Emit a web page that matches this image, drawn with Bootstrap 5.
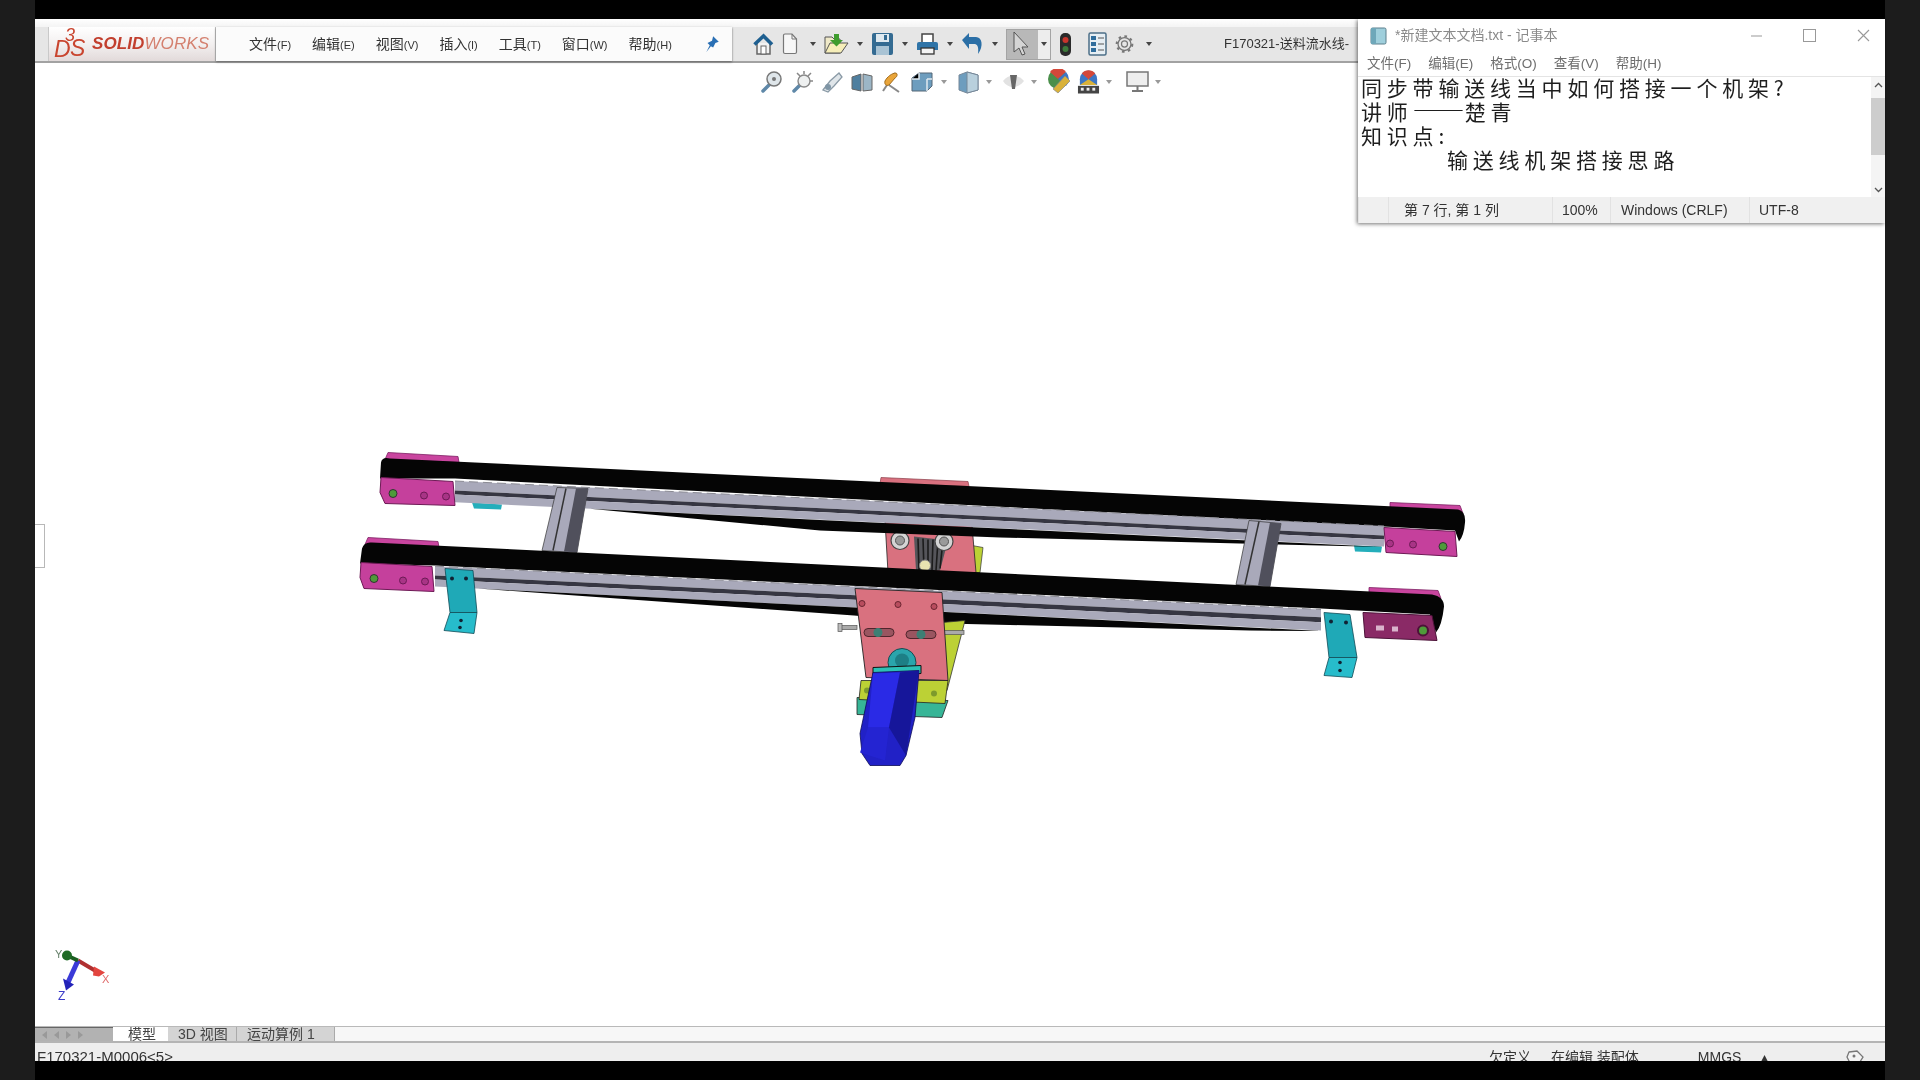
<!DOCTYPE html>
<html lang="zh-CN">
  <head>
    <meta charset="UTF-8" />
    <meta name="viewport" content="width=device-width, initial-scale=1" />
    <title>SOLIDWORKS</title>
    <link href="https://cdn.jsdelivr.net/npm/bootstrap@5.3.0/dist/css/bootstrap.min.css" rel="stylesheet" />
    <style>
      html, body { width: 1920px; height: 1080px; overflow: hidden; }
      body { background: #000; font-family: "Liberation Sans", "Noto Sans CJK SC", sans-serif; color: #333; }
      .side { width: 35px; height: 1080px; background: #1c1c1c; }
      .center { width: 1850px; filter: blur(.45px); }
      .band { height: 19px; background: #000; }
      .app { height: 1042px; background: #fff; }

      /* top toolbar */
      .top-strip { height: 8px; background: linear-gradient(#fff, #f4f4f4); }
      .main-bar { height: 36px; background: #e6e6e6; border-bottom: 2px solid #a2a2a2; }
      .logo-gap { width: 13px; }
      .logo { width: 168px; padding-left: 5px; background: linear-gradient(#fff, #f3f0f0 50%, #e2dada); border-right: 1px solid #c4c4c4; border-left: 1px solid #c9c9c9; }
      .logo-word { font: italic 700 17px "Liberation Sans", sans-serif; color: #c23f2e; letter-spacing: .1px; }
      .logo-word span { font-weight: 400; color: #d4806f; }
      .menu-panel { width: 516px; background: #fbfbfb; padding-left: 33px; gap: 21px; font-size: 14px; box-shadow: 0 1px 2px #666; }
      .menu-panel small { font-size: 11px; }
      .pin { margin-left: 11px; }
      .tools { padding-left: 21px; gap: 8px; }
      .caret { width: 0; height: 0; border: 3px solid transparent; border-top: 4px solid #444; border-bottom: 0; }
      .sel-box { height: 31px; background: #b8b8b8; border: 1px solid #a4a4a4; }
      .sel-main { width: 31px; }
      .sel-drop { width: 12px; background: #ededed; }
      .doc-title { margin-left: 64px; font-size: 13px; white-space: nowrap; color: #333; }

      /* viewport with the model */
      .viewport { flex: 1; min-height: 0; }
      .model { position: absolute; inset: 0; width: 100%; height: 100%; }
      .view-tools { position: relative; padding: 5px 0 0 725px; gap: 6px; height: 32px; }
      .view-tools .caret { border-top-color: #999; }
      .handle { position: absolute; left: 0; top: 461px; width: 10px; height: 44px; background: #fff; border: 1px solid #b8b8b8; border-left: 0; }

      /* bottom tabs */
      .tabs { height: 17px; background: #f7f7f7; border-top: 1px solid #b9b9b9; border-bottom: 2px solid #b4b4b4; font-size: 14px; line-height: 15px; }
      .tab-nav { width: 78px; background: #b2b2b2; border-top: 1px solid #666; gap: 7px; padding-left: 7px; }
      .tab-nav i { width: 0; height: 0; border: 4px solid transparent; border-right: 5px solid #999; border-left: 0; }
      .tab-nav i.fw { border-right: 0; border-left: 5px solid #999; }
      .tab { padding: 0 10px; background: #d4d4d4; border-right: 1px solid #aaa; color: #444; }
      .tab.model-tab { width: 55px; padding: 0 15px; background: #fff; border: 0; white-space: nowrap; }
      .tab.t3d { width: 69px; }
      .tab.motion { width: 98px; }
      .status { height: 18px; background: #eeeeee; font-size: 15px; line-height: 18px; padding-top: 5px; overflow: hidden; color: #333; }
      .status .st-a { margin-left: 2px; }
      .st-b { margin-left: 1316px; font-size: 14px; }
      .st-c { margin-left: 20px; font-size: 14px; }
      .st-d { margin-left: 59px; font-size: 14px; }
      .st-e { margin-left: 20px; font-size: 14px; }
      .st-f { margin-left: 78px; }

      /* notepad window */
      .notepad { position: absolute; left: 1323px; top: 0; width: 527px; height: 204px; background: #fff; box-shadow: -1px 1px 4px rgba(0, 0, 0, .55); }
      .np-title { height: 33px; padding-left: 12px; color: #8a8a8a; font-size: 14px; gap: 8px; }
      .np-btns { gap: 41px; padding-right: 15px; }
      .np-menu { height: 24px; padding-left: 9px; gap: 17px; font-size: 13.5px; color: #6e6e6e; }
      .np-body { height: 121px; border-top: 1px solid #e4e4e4; }
      .np-lines { margin-top: -2px; }
      .np-text { height: 24px; padding-left: 3px; font: 21px/24px "Noto Sans CJK SC", sans-serif; letter-spacing: 4.8px; color: #1e1e1e; white-space: nowrap; }
      .np-dash { font-size: 26px; line-height: 0; letter-spacing: 0; }
      .np-indent { padding-left: 89px; }
      .np-scroll { width: 14px; background: #f4f4f4; }
      .np-thumb { height: 57px; background: #cdcdcd; margin: 6px 0; }
      .np-arrow { height: 15px; }
      .np-status { height: 26px; background: #f0f0f0; font-size: 14px; color: #333; }
      .np-status div { border-left: 1px solid #e2e2e2; line-height: 26px; white-space: nowrap; }
      .c1 { width: 30px; }
      .c2 { width: 164px; padding-left: 15px; }
      .c3 { width: 58px; padding-left: 9px; }
      .c4 { width: 139px; padding-left: 10px; }
      .c5 { width: 136px; padding-left: 9px; }
    </style>
  </head>
  <body>
    <div class="d-flex">
      <div class="side flex-shrink-0"></div>

      <div class="center flex-shrink-0">
        <div class="band"></div>

        <div class="app d-flex flex-column position-relative">
          <div class="top-strip"></div>

          <!-- logo, menu and main toolbar -->
          <div class="main-bar d-flex">
            <div class="logo-gap"></div>
            <div class="logo d-flex align-items-center">
              <svg class="flex-shrink-0" width="38" height="34" viewBox="0 0 38 34">
                <text x="11" y="14" font-size="18" font-style="italic" fill="#c9452f" font-family="Liberation Sans">3</text>
                <text x="0" y="30" font-size="23" font-style="italic" fill="#c9452f" font-family="Liberation Sans">D</text>
                <text x="16" y="29" font-size="23" font-style="italic" fill="#c9452f" font-family="Liberation Sans">S</text>
              </svg>
              <div class="logo-word text-nowrap">SOLID<span>WORKS</span></div>
            </div>
            <div class="menu-panel d-flex align-items-center position-relative">
              <div>文件<small>(F)</small></div>
              <div>编辑<small>(E)</small></div>
              <div>视图<small>(V)</small></div>
              <div>插入<small>(I)</small></div>
              <div>工具<small>(T)</small></div>
              <div>窗口<small>(W)</small></div>
              <div>帮助<small>(H)</small></div>
              <svg class="pin" width="16" height="18" viewBox="0 0 14 16"><path d="M8 1l5 5-3 1-2 4-2-1-4 5 3-6-2-2 4-2z" fill="#2a6fb4"/></svg>
            </div>
            <div class="tools d-flex align-items-center">
              <!-- home -->
              <svg width="21" height="22" viewBox="0 0 21 22"><path d="M4 10v11h13V10" fill="#f2f2f2" stroke="#666" stroke-width="1.5"/><rect x="8" y="13" width="5" height="8" fill="#fff" stroke="#666"/><path d="M1.5 11.5L10.500 3l8.500 8.500" fill="none" stroke="#1e5f90" stroke-width="3.600"/></svg>
              <!-- new -->
              <svg width="16" height="22" viewBox="0 0 16 22"><path d="M1.500 2.500a1.500 1.500 0 0 1 1.500-1.500h7l4.500 5v13a1.500 1.500 0 0 1-1.500 1.500H3a1.500 1.500 0 0 1-1.500-1.500z" fill="#f7f7f7" stroke="#777" stroke-width="1.200"/><path d="M10 1v5h4.500" fill="none" stroke="#777"/></svg>
              <div class="caret ms-1"></div>
              <!-- open -->
              <svg width="25" height="24" viewBox="0 0 25 24"><path d="M1 5h7l2 2h6v14H1z" fill="#efe9c8" stroke="#555"/><path d="M1 21l5-10h18l-7 10z" fill="#f6eeb9" stroke="#555"/><path d="M10 2h5v6h4l-6.500 6.500L6 8h4z" fill="#3f9c2e"/></svg>
              <div class="caret"></div>
              <!-- save -->
              <svg width="23" height="24" viewBox="0 0 23 24"><rect x="1" y="1" width="21" height="22" rx="2" fill="#346b92"/><rect x="5" y="2" width="13" height="8" fill="#dfe9ef"/><rect x="5" y="14" width="13" height="9" fill="#a9c3d4"/><rect x="13" y="3" width="3" height="5" fill="#346b92"/></svg>
              <div class="caret"></div>
              <!-- print -->
              <svg width="23" height="24" viewBox="0 0 23 24"><rect x="6" y="2" width="11" height="9" fill="#fff" stroke="#444" stroke-width="1.500"/><path d="M3 10h17a2 2 0 0 1 2 2v6H1v-6a2 2 0 0 1 2-2z" fill="#2f74a8"/><rect x="5" y="16" width="13" height="6" fill="#f4f4f4" stroke="#333" stroke-width="1.300"/></svg>
              <div class="caret"></div>
              <!-- undo -->
              <svg width="23" height="24" viewBox="0 0 23 24"><path d="M8 5h7c6 0 8 9 2 17 1-8-1-10-4-10H8v5L1 8l7-7z" fill="#2b6fa6"/></svg>
              <div class="caret"></div>
              <!-- select -->
              <div class="sel-box d-flex">
                <div class="sel-main d-flex align-items-center">
                  <svg class="ms-1" width="18" height="26" viewBox="0 0 18 26"><path d="M3 1v20l5-4 3 7 3-1-3-7h6z" fill="#d4d4d4" stroke="#555"/></svg>
                </div>
                <div class="sel-drop d-flex align-items-center justify-content-center"><div class="caret"></div></div>
              </div>
              <!-- rebuild light -->
              <svg width="13" height="25" viewBox="0 0 13 25"><rect x="1" y="1" width="11" height="23" rx="5" fill="#2a2a2a"/><circle cx="6.500" cy="8" r="3" fill="#c8352c"/><circle cx="6.500" cy="17" r="3" fill="#3d7a3a"/></svg>
              <!-- file properties -->
              <svg class="ms-2" width="19" height="24" viewBox="0 0 19 24"><rect x="1" y="1" width="17" height="22" rx="1.500" fill="#e6eef3" stroke="#4c6f88" stroke-width="1.500"/><g fill="#2f6d9c"><rect x="3" y="4" width="5" height="4"/><rect x="3" y="10" width="5" height="4"/><rect x="3" y="16" width="5" height="4"/></g><g stroke="#555"><path d="M10 6h6M10 12h6M10 18h6"/></g></svg>
              <!-- options -->
              <svg width="19" height="22" viewBox="0 0 22 22"><circle cx="11" cy="11" r="7.500" fill="none" stroke="#777" stroke-width="1.500"/><circle cx="11" cy="11" r="9" fill="none" stroke="#777" stroke-width="2.500" stroke-dasharray="3 4"/><circle cx="11" cy="11" r="3.500" fill="none" stroke="#777" stroke-width="1.400"/></svg>
              <div class="caret ms-1"></div>
              <div class="doc-title">F170321-送料流水线-</div>
            </div>
          </div>

          <!-- graphics area -->
          <div class="viewport position-relative">
            <svg class="model" viewBox="35 63 1850 962">
              <!-- back motor plate, behind both rails -->
              <polygon points="881,477 968,481 969,486 880,483" fill="#d9717f" stroke="#8a3c48" stroke-width=".7"/>
              <polygon points="972,545 983,547 980,572 975,572" fill="#bcd135" stroke="#333" stroke-width=".7"/>
              <polygon points="885,520 972,525 976,572 888,572" fill="#d9717f" stroke="#222" stroke-width=".8"/>
              <polygon points="914,536 948,540 940,570 916,570" fill="#55555a"/>
              <g stroke="#1c1c1c" stroke-width="1.600"><path d="M918 538l1 32M923 538l1 32M928 539v31M933 539l-1 31M938 540l-2 30M943 540l-3 28"/></g>
              <circle cx="925" cy="565" r="5.500" fill="#e8e2b0" stroke="#888"/>
              <circle cx="900" cy="540" r="9" fill="#d4d4d4" stroke="#444" stroke-width="1.200"/>
              <circle cx="900" cy="540" r="4.500" fill="#9a9a9a" stroke="#555"/>
              <circle cx="944" cy="541" r="9" fill="#d4d4d4" stroke="#444" stroke-width="1.200"/>
              <circle cx="944" cy="541" r="4.500" fill="#9a9a9a" stroke="#555"/>

              <!-- upper rail -->
              <polygon points="472,502 502,504 501,509 474,508" fill="#24aebb"/>
              <polygon points="1354,545 1382,546 1381,552 1355,551" fill="#24aebb"/>
              <polygon points="388,452 458,456 459,462 385,459" fill="#c9459f" stroke="#7d1f63" stroke-width=".8"/>
              <polygon points="1390,502 1460,505 1463,513 1390,510" fill="#c9459f" stroke="#7d1f63" stroke-width=".8"/>
              <path d="M381,462 Q382,456 390,458 L1458,509 Q1466,511 1465,522 Q1464,535 1459,541 L1455,530 L1384,526 L455,478 L380,478 Z" fill="#050505"/>
              <polygon points="455,480.500 1384,525.500 1384,535 455,490" fill="#a9a9ba"/>
              <polygon points="455,490 1384,535 1384,539 455,494" fill="#363642"/>
              <polygon points="455,494 1384,539 1384,546 455,501.700" fill="#a9a9ba"/>
              <line x1="455" y1="480.500" x2="1384" y2="525.500" stroke="#8b8b94" stroke-width="1" stroke-dasharray="9 5"/>
              <polygon points="590,508.200 820,519.400 1384,546.500 1240,543 1000,537 820,530" fill="#050505"/>
              <polygon points="381,477 453,481 455,505 385,503 380,492" fill="#c5409c" stroke="#6d1a55" stroke-width="1"/>
              <circle cx="393" cy="493" r="4" fill="#4f9a3a" stroke="#333"/>
              <circle cx="424" cy="495" r="3.500" fill="#a83486" stroke="#6d1a55"/>
              <circle cx="446" cy="496" r="3.500" fill="#a83486" stroke="#6d1a55"/>
              <polygon points="1384,527 1455,531 1457,556 1386,552" fill="#c5409c" stroke="#6d1a55" stroke-width="1"/>
              <circle cx="1390" cy="543" r="3.500" fill="#a83486" stroke="#6d1a55"/>
              <circle cx="1413" cy="544" r="3.500" fill="#a83486" stroke="#6d1a55"/>
              <circle cx="1443" cy="546" r="4" fill="#4f9a3a" stroke="#333"/>

              <!-- cross bars -->
              <polygon points="557,487 588,488 577,552 542,550" fill="#a9a9ba" stroke="#333" stroke-width=".7"/>
              <polygon points="576,488 588,488 577,552 564,551" fill="#50505c"/>
              <line x1="566" y1="488" x2="553" y2="550" stroke="#333" stroke-width="1.500"/>
              <polygon points="1249,520 1281,523 1270,586 1236,584" fill="#a9a9ba" stroke="#333" stroke-width=".7"/>
              <polygon points="1270,522 1281,523 1270,586 1258,585" fill="#50505c"/>
              <line x1="1259" y1="521" x2="1245" y2="584" stroke="#333" stroke-width="1.500"/>

              <!-- lower rail -->
              <polygon points="368,537 438,541 439,547 365,544" fill="#c9459f" stroke="#7d1f63" stroke-width=".8"/>
              <polygon points="1369,587 1438,590 1441,598 1369,595" fill="#c9459f" stroke="#7d1f63" stroke-width=".8"/>
              <path d="M360,563 L362,548 Q364,541 372,542 L1432,594 Q1444,596 1444,606 Q1442,625 1436,632 L1430,614 L1321,608 L435,565 Z" fill="#050505"/>
              <polygon points="435,565.700 1321,609 1321,616.700 435,575" fill="#a9a9ba"/>
              <polygon points="435,575 1321,616.700 1321,621.700 435,579" fill="#363642"/>
              <polygon points="435,579 1321,621.700 1321,630 435,586" fill="#a9a9ba"/>
              <line x1="435" y1="565.700" x2="1321" y2="609" stroke="#8b8b94" stroke-width="1" stroke-dasharray="9 5"/>
              <polygon points="478,588 1321,630.500 1250,630 946,623 854,615" fill="#050505"/>
              <polygon points="361,562 432,566 434,591 364,588 360,577" fill="#c5409c" stroke="#6d1a55" stroke-width="1"/>
              <circle cx="374" cy="578" r="4" fill="#4f9a3a" stroke="#333"/>
              <circle cx="403" cy="580" r="3.500" fill="#a83486" stroke="#6d1a55"/>
              <circle cx="425" cy="581" r="3.500" fill="#a83486" stroke="#6d1a55"/>
              <polygon points="1363,612 1432,615 1437,640 1365,637" fill="#8a2a66" stroke="#4c1238" stroke-width="1"/>
              <g fill="#d9b3cc"><rect x="1376" y="625" width="8" height="5"/><rect x="1392" y="626" width="6" height="5"/></g>
              <circle cx="1423" cy="630" r="5" fill="#4f9a3a" stroke="#4c1238" stroke-width="2"/>

              <!-- teal brackets -->
              <polygon points="445,568 473,570 477,612 450,612" fill="#1fa9b7" stroke="#114a55" stroke-width=".8"/>
              <polygon points="450,612 477,612 474,633 444,630" fill="#27bccb" stroke="#114a55" stroke-width=".8"/>
              <circle cx="452" cy="578" r="2" fill="#123"/><circle cx="466" cy="578" r="2" fill="#123"/>
              <circle cx="461" cy="620" r="1.800" fill="#123"/><circle cx="460" cy="627" r="1.800" fill="#123"/>
              <polygon points="1324,612 1350,614 1357,657 1329,657" fill="#1fa9b7" stroke="#114a55" stroke-width=".8"/>
              <polygon points="1329,657 1357,657 1352,677 1324,675" fill="#27bccb" stroke="#114a55" stroke-width=".8"/>
              <circle cx="1331" cy="621" r="2" fill="#123"/><circle cx="1346" cy="622" r="2" fill="#123"/>
              <circle cx="1340" cy="662" r="1.800" fill="#123"/><circle cx="1340" cy="670" r="1.800" fill="#123"/>

              <!-- motor mount, in front -->
              <polygon points="942,622 965,620 947,690 940,690" fill="#bcd135" stroke="#333" stroke-width=".8"/>
              <rect x="839" y="625" width="18" height="4" fill="#aaa" stroke="#555" stroke-width=".7"/>
              <rect x="838" y="623" width="4" height="8" fill="#bbb" stroke="#555" stroke-width=".7"/>
              <rect x="944" y="630" width="20" height="4" fill="#aaa" stroke="#555" stroke-width=".7"/>
              <polygon points="857,697 948,700 942,717 857,714" fill="#37b597" stroke="#222" stroke-width=".8"/>
              <polygon points="861,680 948,680 945,703 859,699" fill="#bcd135" stroke="#222" stroke-width=".8"/>
              <circle cx="867" cy="690" r="3" fill="#7d9a2c"/><circle cx="934" cy="693" r="3" fill="#7d9a2c"/>
              <polygon points="855,588 942,592 948,680 866,677" fill="#d9717f" stroke="#222" stroke-width=".9"/>
              <circle cx="862" cy="603" r="3" fill="#b84d5e" stroke="#6a2530"/>
              <circle cx="898" cy="604" r="3" fill="#b84d5e" stroke="#6a2530"/>
              <circle cx="934" cy="606" r="3" fill="#b84d5e" stroke="#6a2530"/>
              <rect x="864" y="628" width="30" height="8" rx="4" fill="#9a5560" stroke="#50252c"/>
              <rect x="906" y="630" width="30" height="8" rx="4" fill="#9a5560" stroke="#50252c"/>
              <circle cx="878" cy="632" r="4.500" fill="#3d7f74"/><circle cx="921" cy="634" r="4.500" fill="#3d7f74"/>
              <circle cx="902" cy="662" r="14" fill="#2aa5ac" stroke="#174b50"/>
              <circle cx="902" cy="660" r="7" fill="#1d7f86"/>
              <polygon points="873,667 921,665 921,673 873,675" fill="#2cc0b5" stroke="#111"/>
              <polygon points="873,672 919,670 915,717 906,755 900,765 870,765 862,753 860,733" fill="#2121c6" stroke="#0d0d55" stroke-width=".8"/>
              <polygon points="873,673 900,672 889,727 868,727" fill="#2a2ae6"/>
              <polygon points="900,672 919,670 906,755 889,727" fill="#16169a"/>
              <polygon points="868,727 889,727 885,760 860,752" fill="#2424d2"/>

              <!-- triad -->
              <line x1="78" y1="960" x2="100" y2="973" stroke="#b03030" stroke-width="4"/>
              <polygon points="94,966 105,972 99,976 93,975" fill="#e3453f"/>
              <line x1="78" y1="960" x2="68" y2="982" stroke="#3a3ad8" stroke-width="5"/>
              <polygon points="63,978 74,984 66,990" fill="#2323b8"/>
              <line x1="67" y1="955" x2="78" y2="960" stroke="#1b5e20" stroke-width="4"/>
              <circle cx="67" cy="955" r="5" fill="#1f6a25"/>
              <text x="55" y="957" font-size="11" fill="#66806a" font-family="Liberation Sans">Y</text>
              <text x="102" y="982" font-size="11" fill="#e06c6c" font-family="Liberation Sans">X</text>
              <text x="58" y="999" font-size="12" fill="#3b3bc8" font-family="Liberation Sans">Z</text>
            </svg>

            <!-- heads-up toolbar -->
            <div class="view-tools d-flex align-items-center">
              <svg width="23" height="22" viewBox="0 0 23 22"><path d="M3 20l7-7" stroke="#5f88a8" stroke-width="3.500" stroke-linecap="round"/><circle cx="14" cy="8" r="7" fill="#dfe6ea" stroke="#777" stroke-width="1.500"/><circle cx="14" cy="8" r="2" fill="#777"/></svg>
              <svg width="26" height="22" viewBox="0 0 26 22"><path d="M5 20l6-6" stroke="#5f88a8" stroke-width="3.500" stroke-linecap="round"/><circle cx="15" cy="10" r="6" fill="#eef0f0" stroke="#888" stroke-width="1.400"/><path d="M8 2l3 3M22 2l-3 3M24 10h-3M15 0v3" stroke="#888" stroke-width="1.500"/></svg>
              <svg width="23" height="22" viewBox="0 0 23 22"><path d="M2 19l7-9 9-8 3 4-8 9-6 6z" fill="#dfe5e9" stroke="#8a9aa6" stroke-width="1.300"/><circle cx="7" cy="16" r="3" fill="#7f95a5"/></svg>
              <svg width="24" height="22" viewBox="0 0 24 22"><path d="M2 6l9-3v17l-9-2z" fill="#4f7f9f" stroke="#666"/><path d="M13 3l9 2v14l-9 1z" fill="#9cb6c6" stroke="#666"/></svg>
              <svg width="23" height="22" viewBox="0 0 23 22"><path d="M3 20L15 2" stroke="#888" stroke-width="2"/><path d="M9 14l10 7" stroke="#888" stroke-width="2"/><path d="M5 10c2-4 7-8 11-8 2 1 1 4-1 5l-6 7c-2 1-5 0-4-4z" fill="#e9a53a" stroke="#a36c1b"/></svg>
              <svg width="26" height="22" viewBox="0 0 26 22"><path d="M3 7l7-5h13v13l-5 5H3z" fill="#6d9dbe" stroke="#567"/><path d="M10 2v6H3M18 8v12M18 8h5" stroke="#dfe9ef" stroke-width="1.500"/></svg>
              <div class="caret"></div>
              <svg class="ms-1" width="23" height="24" viewBox="0 0 23 24"><path d="M2 5l8-3 11 3v15l-11 3-8-3z" fill="#6d9dbe" stroke="#789"/><path d="M10 2v21l11-3V5z" fill="#b9d0dd" stroke="#789"/></svg>
              <div class="caret"></div>
              <svg class="ms-1" width="23" height="20" viewBox="0 0 23 20"><path d="M1 9c5-7 15-7 21 0-6 8-16 8-21 0z" fill="#e2e2e2"/><path d="M8 3h7l-2 14h-3z" fill="#666"/></svg>
              <div class="caret"></div>
              <svg class="ms-1" width="24" height="26" viewBox="0 0 24 26"><circle cx="11" cy="10" r="10" fill="#4a8f4a"/><path d="M11 10L3 3a10 10 0 0 1 16 0z" fill="#d4483a"/><path d="M11 10l8-7a10 10 0 0 1 0 14z" fill="#3d76c4"/><path d="M6 20l12-13 5 5-12 12z" fill="#d9b23a" stroke="#888" stroke-width=".7"/></svg>
              <svg width="23" height="26" viewBox="0 0 24 26"><path d="M12 1a9 9 0 0 1 9 9v6H3v-6a9 9 0 0 1 9-9z" fill="#3d76c4"/><path d="M12 10L5 4a9 9 0 0 1 14 0z" fill="#d4483a"/><path d="M3 16l9-6 9 6z" fill="#d9b23a"/><rect x="1" y="17" width="22" height="8" fill="#444"/><g fill="#eee"><rect x="4" y="19" width="3" height="3"/><rect x="10" y="19" width="3" height="3"/><rect x="16" y="19" width="3" height="3"/></g></svg>
              <div class="caret"></div>
              <svg class="ms-2" width="23" height="22" viewBox="0 0 23 22"><rect x="1" y="1" width="21" height="14" fill="#eee" stroke="#777" stroke-width="1.500"/><path d="M11.500 15v4M6 20h11" stroke="#777" stroke-width="2"/></svg>
              <div class="caret"></div>
            </div>

            <div class="handle"></div>
          </div>

          <!-- model tabs -->
          <div class="tabs d-flex">
            <div class="tab-nav d-flex align-items-center"><i></i><i></i><i class="fw"></i><i class="fw"></i></div>
            <div class="tab model-tab">模型</div>
            <div class="tab t3d text-nowrap">3D 视图</div>
            <div class="tab motion text-nowrap">运动算例 1</div>
          </div>

          <!-- status bar, cut off by the band below -->
          <div class="status d-flex">
            <div class="st-a text-nowrap">F170321-M0006&lt;5&gt;</div>
            <div class="st-b text-nowrap">欠定义</div>
            <div class="st-c text-nowrap">在编辑 装配体</div>
            <div class="st-d">MMGS</div>
            <div class="st-e">&#9652;</div>
            <div class="st-f">
              <svg width="18" height="16" viewBox="0 0 18 16"><path d="M3 2l8-1 6 6-5 8-8-2-3-6z" fill="#f3f3f3" stroke="#777" stroke-width="1.300"/><circle cx="8" cy="6" r="1.500" fill="#777"/></svg>
            </div>
          </div>

          <!-- notepad over the application -->
          <div class="notepad d-flex flex-column">
            <div class="np-title d-flex align-items-center">
              <svg width="17" height="18" viewBox="0 0 17 18"><rect x="1" y="1" width="15" height="16" rx="1.500" fill="#9fcfdc" stroke="#5b7f8c"/><rect x="1" y="1" width="5" height="16" fill="#6ea7b9"/></svg>
              <div>*新建文本文档.txt - 记事本</div>
              <div class="np-btns d-flex align-items-center ms-auto">
                <svg width="11" height="11" viewBox="0 0 11 11"><path d="M0 6h11" stroke="#999"/></svg>
                <svg width="13" height="13" viewBox="0 0 13 13"><rect x=".5" y=".5" width="12" height="12" fill="none" stroke="#999"/></svg>
                <svg width="13" height="13" viewBox="0 0 13 13"><path d="M1 1l11 11M12 1L1 12" stroke="#999" stroke-width="1.100"/></svg>
              </div>
            </div>
            <div class="np-menu d-flex align-items-center">
              <div>文件(F)</div><div>编辑(E)</div><div>格式(O)</div><div>查看(V)</div><div>帮助(H)</div>
            </div>
            <div class="np-body d-flex">
              <div class="np-lines flex-grow-1">
                <div class="np-text">同步带输送线当中如何搭接一个机架?</div>
                <div class="np-text">讲师<span class="np-dash">——</span>楚青</div>
                <div class="np-text">知识点:</div>
                <div class="np-text np-indent">输送线机架搭接思路</div>
              </div>
              <div class="np-scroll d-flex flex-column">
                <div class="np-arrow d-flex align-items-center justify-content-center"><svg width="9" height="6" viewBox="0 0 9 6"><path d="M1 5l3.500-3.500L8 5" fill="none" stroke="#555" stroke-width="1.300"/></svg></div>
                <div class="np-thumb"></div>
                <div class="np-arrow d-flex align-items-center justify-content-center mt-auto"><svg width="9" height="6" viewBox="0 0 9 6"><path d="M1 1l3.500 3.500L8 1" fill="none" stroke="#555" stroke-width="1.300"/></svg></div>
              </div>
            </div>
            <div class="np-status d-flex">
              <div class="c1"></div>
              <div class="c2">第 7 行, 第 1 列</div>
              <div class="c3">100%</div>
              <div class="c4">Windows (CRLF)</div>
              <div class="c5">UTF-8</div>
            </div>
          </div>
        </div>

        <div class="band"></div>
      </div>

      <div class="side flex-shrink-0"></div>
    </div>

    <script src="https://cdn.jsdelivr.net/npm/bootstrap@5.3.0/dist/js/bootstrap.bundle.min.js"></script>
  </body>
</html>
